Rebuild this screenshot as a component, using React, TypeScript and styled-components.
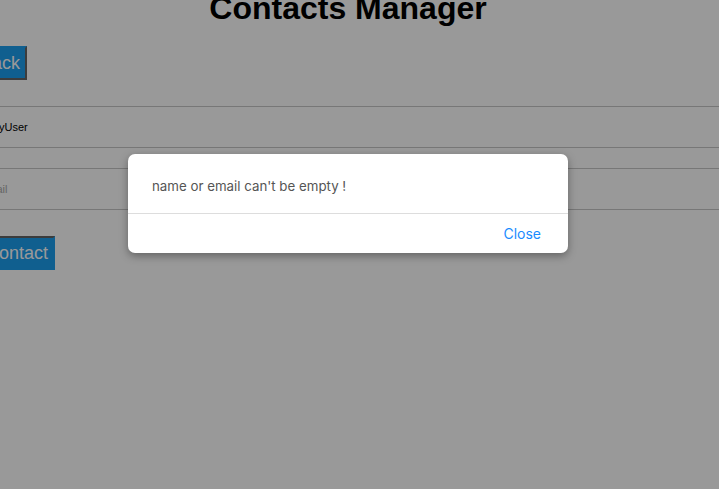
import React from "react";
import styled, { createGlobalStyle } from "styled-components";

const GlobalStyle = createGlobalStyle`
  html, body {
    margin: 0;
    padding: 0;
    overflow: hidden;
    background: #ffffff;
  }
  body {
    font-family: "Liberation Sans", Arial, sans-serif;
  }
`;

const Main = styled.main`
  position: relative;
  box-sizing: border-box;
  width: 814px;
  min-height: 489px;
  margin-left: -59px;
  display: flex;
  flex-direction: column;
  align-items: flex-start;
`;

const Title = styled.h1`
  align-self: stretch;
  margin: -10px 0 0;
  font-family: "Liberation Sans", Arial, sans-serif;
  font-size: 32px;
  font-weight: 700;
  line-height: 37px;
  text-align: center;
  color: #000;
`;

const Button = styled.button<{ $pressed?: boolean; $offset: number; $gap: number }>`
  margin: ${(p) => p.$gap}px 0 0 ${(p) => p.$offset}px;
  padding: 4px 5px 4px 6px;
  font-family: "Liberation Sans", Arial, sans-serif;
  font-size: 18px;
  line-height: 22px;
  color: #ffffff;
  background: #1c9eee;
  border: 2px solid #1c9eee;
  ${(p) =>
    p.$pressed
      ? "border-top-color: #646464; border-left-color: #646464;"
      : "border-right-color: #646464; border-bottom-color: #646464;"}
  cursor: pointer;
`;

const Input = styled.input<{ $gap: number }>`
  align-self: stretch;
  box-sizing: border-box;
  height: 42px;
  margin: ${(p) => p.$gap}px 0 0;
  padding: 0 0 0 38px;
  font-family: "Liberation Sans", Arial, sans-serif;
  font-size: 11px;
  color: #000;
  background: #fff;
  border: 1px solid #c6c6c6;
  outline: none;
  &::placeholder {
    color: #a9a9a9;
  }
`;

const Overlay = styled.div`
  position: absolute;
  inset: 0;
  background: rgba(0, 0, 0, 0.4);
  display: flex;
  justify-content: center;
  align-items: flex-start;
  padding-top: 154px;
`;

const Dialog = styled.div`
  width: 440px;
  background: #ffffff;
  border-radius: 7px;
  box-shadow: 0 3px 9px rgba(0, 0, 0, 0.35);
  font-family: Inter, "Noto Sans", sans-serif;
  overflow: hidden;
`;

const DialogBody = styled.div`
  padding: 23px 24px 18px;
  font-size: 13.3px;
  line-height: 18px;
  color: #555555;
  border-bottom: 1px solid #dddddd;
`;

const DialogFooter = styled.div`
  display: flex;
  justify-content: flex-end;
  padding: 0 27px;
  height: 39px;
  align-items: center;
`;

const CloseButton = styled.button`
  padding: 0;
  background: none;
  border: none;
  font-family: Inter, "Noto Sans", sans-serif;
  font-size: 14px;
  color: #1a8cff;
  cursor: pointer;
`;

export default function App() {
  return (
    <>
      <GlobalStyle />
      <Main>
        <Title>Contacts Manager</Title>
        <Button $offset={31} $gap={19}>Back</Button>
        <Input $gap={26} defaultValue="BusyUser" />
        <Input $gap={20} placeholder="Email" />
        <Button $pressed $offset={0} $gap={26}>Add Contact</Button>
        <Overlay>
          <Dialog role="dialog">
            <DialogBody>name or email can't be empty !</DialogBody>
            <DialogFooter>
              <CloseButton>Close</CloseButton>
            </DialogFooter>
          </Dialog>
        </Overlay>
      </Main>
    </>
  );
}
